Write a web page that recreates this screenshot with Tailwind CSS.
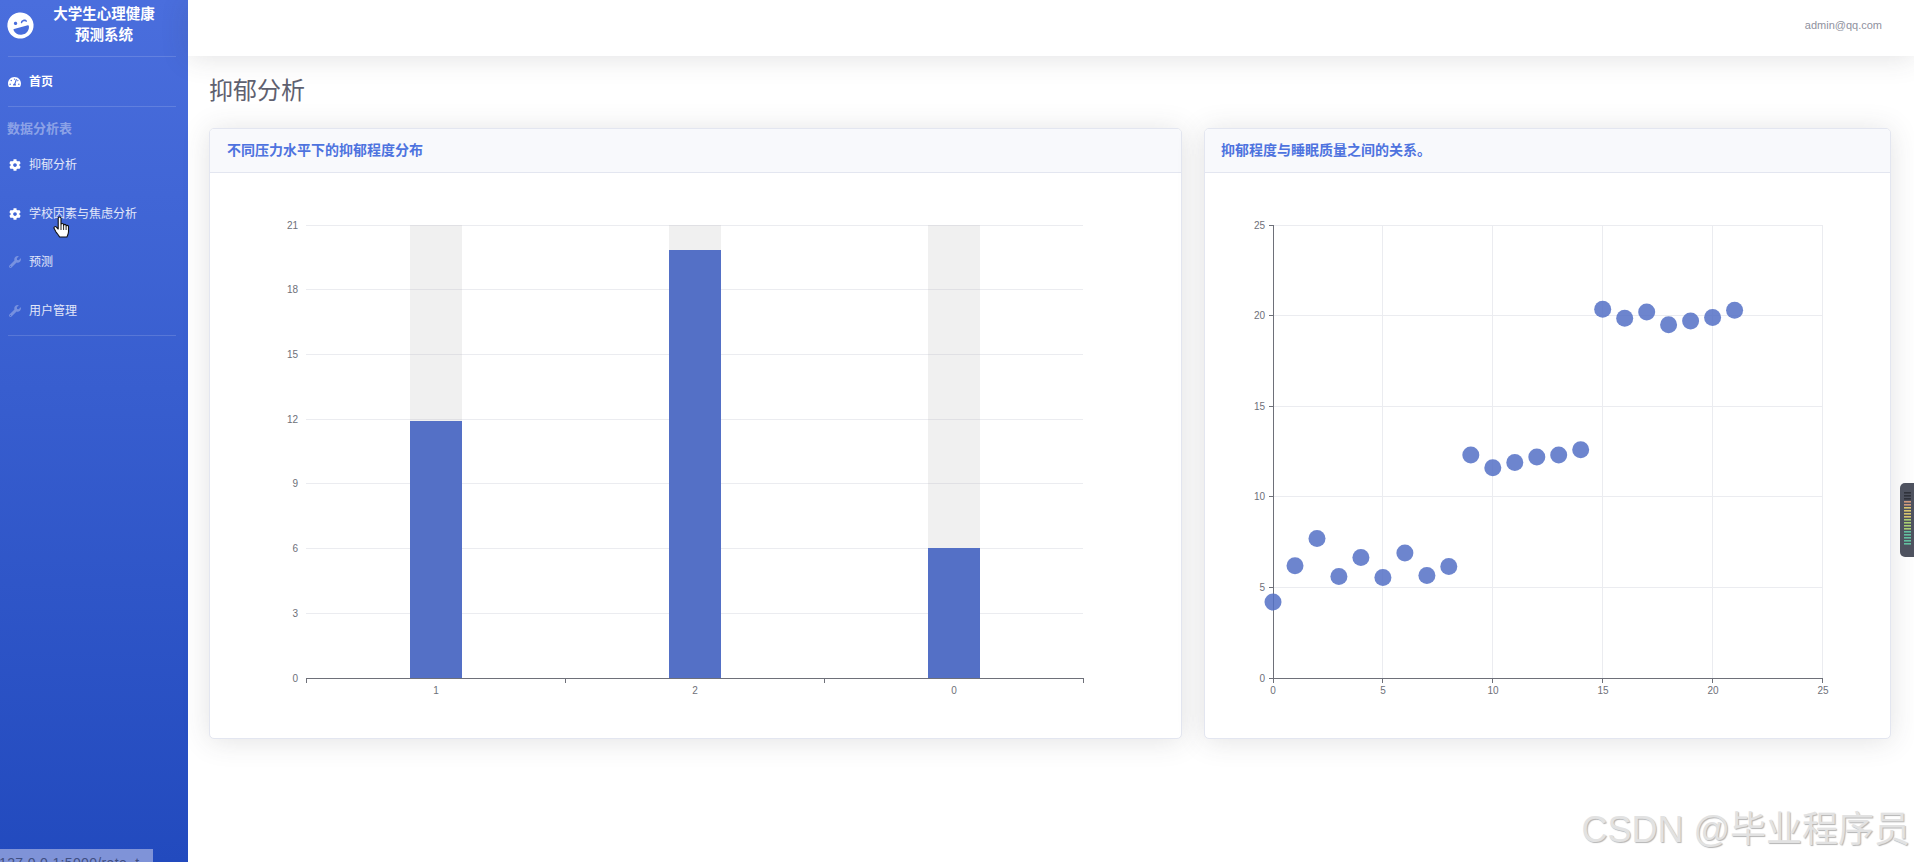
<!DOCTYPE html>
<html lang="zh-CN">
<head>
<meta charset="utf-8">
<title>抑郁分析</title>
<script src="https://cdn.jsdelivr.net/npm/@tailwindcss/browser@4"></script>
</head>
<body class="[font-family:'Liberation_Sans','Noto_Sans_CJK_SC',sans-serif] bg-white overflow-hidden">
<div class="relative flex h-[862px] w-[1914px] overflow-hidden bg-white">

  <!-- Sidebar -->
  <aside class="w-[188px] h-full shrink-0 flex flex-col bg-linear-to-b from-[#4a6edd] to-[#224abe] text-white">
    <div class="h-14 flex items-center pl-[7px] shrink-0">
      <svg class="w-[27px] h-[27px] -rotate-[15deg] shrink-0 -mt-[6px]" viewBox="0 0 496 512" fill="#fff"><path d="M248 8C111 8 0 119 0 256s111 248 248 248 248-111 248-248S385 8 248 8zm20.1 198.1c4-25.2 34.2-42.1 59.9-42.1s55.9 16.9 59.9 42.1c1.7 11.1-11.4 18.3-19.8 10.8l-9.5-8.5c-14.8-13.2-46.2-13.2-61 0L288 217c-8.4 7.4-21.6.3-19.9-10.9zM168 160c17.7 0 32 14.3 32 32s-14.3 32-32 32-32-14.3-32-32 14.3-32 32-32zm230.9 146C390 377 329.4 432 256 432h-16c-73.4 0-134-55-142.9-126-1.2-9.5 6.3-18 15.9-18h270c9.6 0 17.1 8.4 15.9 18z"/></svg>
      <div class="flex-1 text-center font-bold text-[14.5px] leading-[21px] -mt-[6px] pr-[14px]">大学生心理健康<br>预测系统</div>
    </div>
    <div class="ml-2 mr-3 h-px bg-white/15 shrink-0"></div>
    <a class="h-[49px] flex items-center pl-2 gap-[8px] font-bold text-[12px] shrink-0">
      <svg class="w-[13px] h-[12px]" viewBox="0 0 576 512" fill="#fff"><path d="M288 32C128.94 32 0 160.94 0 320c0 52.8 14.25 102.26 39.06 144.8 5.61 9.62 16.3 15.2 27.44 15.2h443c11.14 0 21.83-5.58 27.44-15.2C561.75 422.26 576 372.8 576 320c0-159.06-128.94-288-288-288zm0 64c14.71 0 26.58 10.13 30.32 23.65-1.11 2.26-2.64 4.23-3.45 6.67l-9.22 27.67c-5.13 3.49-10.97 6.01-17.64 6.01-17.67 0-32-14.33-32-32S270.33 96 288 96zM96 384c-17.67 0-32-14.33-32-32s14.33-32 32-32 32 14.33 32 32-14.33 32-32 32zm48-160c-17.67 0-32-14.33-32-32s14.33-32 32-32 32 14.33 32 32-14.33 32-32 32zm246.77-72.41l-61.33 184C343.13 347.33 352 364.54 352 384c0 11.72-3.38 22.55-8.88 32H232.88c-5.5-9.45-8.88-20.28-8.88-32 0-33.94 26.5-61.43 59.9-63.59l61.34-184.01c4.17-12.56 17.73-19.45 30.36-15.17 12.57 4.19 19.35 17.79 15.17 30.36zm14.66 57.2l15.52-46.55c3.47-1.29 7.13-2.23 11.05-2.23 17.67 0 32 14.33 32 32s-14.33 32-32 32c-11.38-.01-20.89-6.28-26.57-15.22zM480 384c-17.67 0-32-14.33-32-32s14.33-32 32-32 32 14.33 32 32-14.33 32-32 32z"/></svg>
      <span>首页</span>
    </a>
    <div class="ml-2 mr-3 h-px bg-white/15 shrink-0"></div>
    <div class="h-[34px] pl-[7px] pt-[13px] text-[13px] leading-[18px] font-bold text-white/40 shrink-0">数据分析表</div>
    <a class="h-[48.5px] flex items-center pl-[9px] gap-[8px] text-[12px] text-white/85 shrink-0">
      <svg class="w-3 h-3" viewBox="0 0 512 512" fill="#fff"><path d="M487.4 315.7l-42.6-24.6c4.3-23.2 4.3-47 0-70.2l42.6-24.6c4.9-2.8 7.1-8.6 5.5-14-11.1-35.6-30-67.8-54.7-94.6-3.8-4.1-10-5.1-14.8-2.3L380.8 110c-17.9-15.4-38.5-27.3-60.8-35.1V25.8c0-5.6-3.9-10.5-9.4-11.7-36.7-8.2-74.3-7.8-109.2 0-5.5 1.2-9.4 6.1-9.4 11.7V75c-22.2 7.9-42.8 19.8-60.8 35.1L88.7 85.5c-4.9-2.8-11-1.9-14.8 2.3-24.7 26.7-43.6 58.9-54.7 94.6-1.7 5.4.6 11.2 5.5 14L67.3 221c-4.3 23.2-4.3 47 0 70.2l-42.6 24.6c-4.9 2.8-7.1 8.6-5.5 14 11.1 35.6 30 67.8 54.7 94.6 3.8 4.1 10 5.1 14.8 2.3l42.6-24.6c17.9 15.4 38.5 27.3 60.8 35.1v49.2c0 5.6 3.9 10.5 9.4 11.7 36.7 8.2 74.3 7.8 109.2 0 5.5-1.2 9.4-6.1 9.4-11.7v-49.2c22.2-7.9 42.8-19.8 60.8-35.1l42.6 24.6c4.9 2.8 11 1.9 14.8-2.3 24.7-26.7 43.6-58.9 54.7-94.6 1.5-5.5-.7-11.3-5.6-14.1zM256 336c-44.1 0-80-35.9-80-80s35.9-80 80-80 80 35.9 80 80-35.9 80-80 80z"/></svg>
      <span>抑郁分析</span>
    </a>
    <a class="h-[48.5px] flex items-center pl-[9px] gap-[8px] text-[12px] text-white/85 shrink-0">
      <svg class="w-3 h-3" viewBox="0 0 512 512" fill="#fff"><path d="M487.4 315.7l-42.6-24.6c4.3-23.2 4.3-47 0-70.2l42.6-24.6c4.9-2.8 7.1-8.6 5.5-14-11.1-35.6-30-67.8-54.7-94.6-3.8-4.1-10-5.1-14.8-2.3L380.8 110c-17.9-15.4-38.5-27.3-60.8-35.1V25.8c0-5.6-3.9-10.5-9.4-11.7-36.7-8.2-74.3-7.8-109.2 0-5.5 1.2-9.4 6.1-9.4 11.7V75c-22.2 7.9-42.8 19.8-60.8 35.1L88.7 85.5c-4.9-2.8-11-1.9-14.8 2.3-24.7 26.7-43.6 58.9-54.7 94.6-1.7 5.4.6 11.2 5.5 14L67.3 221c-4.3 23.2-4.3 47 0 70.2l-42.6 24.6c-4.9 2.8-7.1 8.6-5.5 14 11.1 35.6 30 67.8 54.7 94.6 3.8 4.1 10 5.1 14.8 2.3l42.6-24.6c17.9 15.4 38.5 27.3 60.8 35.1v49.2c0 5.6 3.9 10.5 9.4 11.7 36.7 8.2 74.3 7.8 109.2 0 5.5-1.2 9.4-6.1 9.4-11.7v-49.2c22.2-7.9 42.8-19.8 60.8-35.1l42.6 24.6c4.9 2.8 11 1.9 14.8-2.3 24.7-26.7 43.6-58.9 54.7-94.6 1.5-5.5-.7-11.3-5.6-14.1zM256 336c-44.1 0-80-35.9-80-80s35.9-80 80-80 80 35.9 80 80-35.9 80-80 80z"/></svg>
      <span>学校因素与焦虑分析</span>
    </a>
    <a class="h-[48.5px] flex items-center pl-[9px] gap-[8px] text-[12px] text-white/85 shrink-0">
      <svg class="w-3 h-3" viewBox="0 0 512 512" fill="#fff" fill-opacity=".3"><path d="M507.73 109.1c-2.24-9.03-13.54-12.09-20.12-5.51l-74.36 74.36-67.88-11.31-11.31-67.88 74.36-74.36c6.62-6.62 3.43-17.9-5.66-20.16-47.38-11.74-99.55.91-136.58 37.93-39.64 39.64-50.55 97.1-34.05 147.2L18.74 402.76c-24.99 24.99-24.99 65.51 0 90.5 24.99 24.99 65.51 24.99 90.5 0l213.21-213.21c50.12 16.71 107.47 5.68 147.37-34.22 37.07-37.07 49.7-89.32 37.91-136.73zM64 472c-13.25 0-24-10.75-24-24 0-13.26 10.75-24 24-24s24 10.74 24 24c0 13.25-10.75 24-24 24z"/></svg>
      <span>预测</span>
    </a>
    <a class="h-[48.5px] flex items-center pl-[9px] gap-[8px] text-[12px] text-white/85 shrink-0">
      <svg class="w-3 h-3" viewBox="0 0 512 512" fill="#fff" fill-opacity=".3"><path d="M507.73 109.1c-2.24-9.03-13.54-12.09-20.12-5.51l-74.36 74.36-67.88-11.31-11.31-67.88 74.36-74.36c6.62-6.62 3.43-17.9-5.66-20.16-47.38-11.74-99.55.91-136.58 37.93-39.64 39.64-50.55 97.1-34.05 147.2L18.74 402.76c-24.99 24.99-24.99 65.51 0 90.5 24.99 24.99 65.51 24.99 90.5 0l213.21-213.21c50.12 16.71 107.47 5.68 147.37-34.22 37.07-37.07 49.7-89.32 37.91-136.73zM64 472c-13.25 0-24-10.75-24-24 0-13.26 10.75-24 24-24s24 10.74 24 24c0 13.25-10.75 24-24 24z"/></svg>
      <span>用户管理</span>
    </a>
    <div class="ml-2 mr-3 h-px bg-white/15 shrink-0"></div>
  </aside>

  <!-- Main -->
  <main class="flex-1 min-w-0 flex flex-col">
    <header class="relative z-10 h-14 shrink-0 bg-white flex items-center justify-end pr-[32px] shadow-[0_2px_28px_0_rgba(58,59,69,0.15)]">
      <span class="text-[11px] text-[#8f919e] -mt-[6px]">admin@qq.com</span>
    </header>
    <div class="flex-1 pl-[21px] pr-[23px]">
      <h1 class="h-[72px] pt-[19px] text-2xl leading-[32px] font-normal text-[#5f6170]">抑郁分析</h1>
      <div class="flex gap-[22px] h-[611px]">
        <section class="w-[973px] shrink-0 flex flex-col bg-white border border-[#e3e6f0] rounded-[5px] shadow-[0_2px_28px_0_rgba(58,59,69,0.15)] overflow-hidden">
          <div class="h-11 shrink-0 flex items-center pl-[17px] bg-[#f8f9fc] border-b border-[#e3e6f0] text-[14px] font-bold text-[#4e73df]">不同压力水平下的抑郁程度分布</div>
          <svg class="flex-1 w-full text-[10px] fill-[#6e7079]" viewBox="0 0 971 565" preserveAspectRatio="xMinYMin">
            <g stroke="#ebecf0" stroke-width="1">
              <line x1="96" x2="873" y1="52.5" y2="52.5"/><line x1="96" x2="873" y1="116.5" y2="116.5"/><line x1="96" x2="873" y1="181.5" y2="181.5"/><line x1="96" x2="873" y1="246.5" y2="246.5"/><line x1="96" x2="873" y1="310.5" y2="310.5"/><line x1="96" x2="873" y1="375.5" y2="375.5"/><line x1="96" x2="873" y1="440.5" y2="440.5"/>
            </g>
            <rect x="200" y="52" width="52" height="453" fill="#b4b4b4" fill-opacity=".2"/>
            <rect x="459" y="52" width="52" height="453" fill="#b4b4b4" fill-opacity=".2"/>
            <rect x="718" y="52" width="52" height="453" fill="#b4b4b4" fill-opacity=".2"/>
            <rect x="200" y="248" width="52" height="257" fill="#5470c6"/>
            <rect x="459" y="77" width="52" height="428" fill="#5470c6"/>
            <rect x="718" y="375" width="52" height="130" fill="#5470c6"/>
            <g stroke="#6e7079" stroke-width="1">
              <line x1="96" x2="873" y1="505.5" y2="505.5"/>
              <line x1="96.5" x2="96.5" y1="505" y2="510"/><line x1="355.5" x2="355.5" y1="505" y2="510"/><line x1="614.5" x2="614.5" y1="505" y2="510"/><line x1="873.5" x2="873.5" y1="505" y2="510"/>
            </g>
            <g text-anchor="end">
              <text x="88" y="56">21</text><text x="88" y="120">18</text><text x="88" y="185">15</text><text x="88" y="250">12</text><text x="88" y="314">9</text><text x="88" y="379">6</text><text x="88" y="444">3</text><text x="88" y="509">0</text>
            </g>
            <g text-anchor="middle">
              <text x="226" y="521">1</text><text x="485" y="521">2</text><text x="744" y="521">0</text>
            </g>
          </svg>
        </section>
        <section class="flex-1 min-w-0 flex flex-col bg-white border border-[#e3e6f0] rounded-[5px] shadow-[0_2px_28px_0_rgba(58,59,69,0.15)] overflow-hidden">
          <div class="h-11 shrink-0 flex items-center pl-[16px] bg-[#f8f9fc] border-b border-[#e3e6f0] text-[14px] font-bold text-[#4e73df]">抑郁程度与睡眠质量之间的关系。</div>
          <svg class="flex-1 w-full text-[10px] fill-[#6e7079]" viewBox="0 0 685 565" preserveAspectRatio="xMinYMin">
            <g stroke="#ebecf0" stroke-width="1">
              <line x1="68" x2="618" y1="52.5" y2="52.5"/><line x1="68" x2="618" y1="142.5" y2="142.5"/><line x1="68" x2="618" y1="233.5" y2="233.5"/><line x1="68" x2="618" y1="323.5" y2="323.5"/><line x1="68" x2="618" y1="414.5" y2="414.5"/>
              <line x1="177.5" x2="177.5" y1="52" y2="505"/><line x1="287.5" x2="287.5" y1="52" y2="505"/><line x1="397.5" x2="397.5" y1="52" y2="505"/><line x1="507.5" x2="507.5" y1="52" y2="505"/><line x1="617.5" x2="617.5" y1="52" y2="505"/>
            </g>
            <g stroke="#6e7079" stroke-width="1">
              <line x1="68.5" x2="68.5" y1="52" y2="505"/>
              <line x1="68" x2="618" y1="505.5" y2="505.5"/>
              <line x1="64" x2="68" y1="52.5" y2="52.5"/><line x1="64" x2="68" y1="142.5" y2="142.5"/><line x1="64" x2="68" y1="233.5" y2="233.5"/><line x1="64" x2="68" y1="323.5" y2="323.5"/><line x1="64" x2="68" y1="414.5" y2="414.5"/><line x1="64" x2="68" y1="505.5" y2="505.5"/>
              <line x1="68.5" x2="68.5" y1="505" y2="510"/><line x1="177.5" x2="177.5" y1="505" y2="510"/><line x1="287.5" x2="287.5" y1="505" y2="510"/><line x1="397.5" x2="397.5" y1="505" y2="510"/><line x1="507.5" x2="507.5" y1="505" y2="510"/><line x1="617.5" x2="617.5" y1="505" y2="510"/>
            </g>
            <g text-anchor="end">
              <text x="60" y="56">25</text><text x="60" y="146">20</text><text x="60" y="237">15</text><text x="60" y="327">10</text><text x="60" y="418">5</text><text x="60" y="509">0</text>
            </g>
            <g text-anchor="middle">
              <text x="68" y="521">0</text><text x="178" y="521">5</text><text x="288" y="521">10</text><text x="398" y="521">15</text><text x="508" y="521">20</text><text x="618" y="521">25</text>
            </g>
            <g fill="#5470c6" fill-opacity=".85">
              <circle cx="68" cy="429" r="8.5"/><circle cx="90" cy="392.7" r="8.5"/><circle cx="112" cy="365.5" r="8.5"/><circle cx="133.9" cy="403.5" r="8.5"/><circle cx="155.9" cy="384.5" r="8.5"/><circle cx="177.9" cy="404.4" r="8.5"/><circle cx="199.9" cy="380" r="8.5"/><circle cx="221.9" cy="402.6" r="8.5"/><circle cx="243.8" cy="393.6" r="8.5"/><circle cx="265.8" cy="282.1" r="8.5"/><circle cx="287.8" cy="294.8" r="8.5"/><circle cx="309.8" cy="289.4" r="8.5"/><circle cx="331.8" cy="283.9" r="8.5"/><circle cx="353.7" cy="282.1" r="8.5"/><circle cx="375.7" cy="276.7" r="8.5"/><circle cx="397.7" cy="136.3" r="8.5"/><circle cx="419.7" cy="145.3" r="8.5"/><circle cx="441.7" cy="139" r="8.5"/><circle cx="463.6" cy="151.7" r="8.5"/><circle cx="485.6" cy="148" r="8.5"/><circle cx="507.6" cy="144.4" r="8.5"/><circle cx="529.6" cy="137.2" r="8.5"/>
            </g>
          </svg>
        </section>
      </div>
    </div>
  </main>

  <!-- Mouse pointer over the nav item -->
  <svg class="absolute left-[53px] top-[216px] w-[18px] h-[23px]" viewBox="0 0 18 23">
    <path d="M5.2 2.2c0-1.6 2.8-1.6 2.8 0v6.4c0-1.5 2.6-1.5 2.6 0v.8c0-1.4 2.5-1.4 2.5 0v.9c0-1.3 2.4-1.2 2.4.3v5.2c0 2.4-1 3.4-1.6 5.2H6.6c-.8-1.8-2.2-3-3.6-5L1.2 12.6c-.9-1.4 1-2.8 2.2-1.5l1.8 1.9z" fill="#fff" stroke="#111" stroke-width="1.1" stroke-linejoin="round"/>
    <path d="M8 9v5M10.6 9.5V14M13.1 10.5V14" stroke="#111" stroke-width=".9" fill="none"/>
  </svg>

  <!-- Browser link status -->
  <div class="absolute left-0 bottom-0 w-[153px] h-[13px] overflow-hidden bg-[#7f93d8] text-[14px] leading-[18px] pt-[5px] whitespace-nowrap text-[#3f4f82] tracking-[0.35px] -indent-[1px]">127.0.0.1:5000/rate_t</div>

  <!-- Edge widget -->
  <div class="absolute right-0 top-[483px] w-[14px] h-[74px] rounded-l-[5px] bg-[#4e525f]">
    <svg class="absolute left-[4px] top-[9px] w-[7px] h-[56px]" viewBox="0 0 7 56">
      <g fill="#2f323b"><rect y="0" width="7" height="1.6"/><rect y="3" width="7" height="1.6"/><rect y="6" width="7" height="1.6"/></g>
      <g fill="#d09a7c"><rect y="9" width="7" height="1.6"/><rect y="12" width="7" height="1.6"/></g>
      <g fill="#d8c66e"><rect y="15" width="7" height="1.6"/><rect y="18" width="7" height="1.6"/><rect y="21" width="7" height="1.6"/><rect y="24" width="7" height="1.6"/></g>
      <g fill="#a9cf72"><rect y="27" width="7" height="1.6"/><rect y="30" width="7" height="1.6"/><rect y="33" width="7" height="1.6"/><rect y="36" width="7" height="1.6"/></g>
      <g fill="#62c0a0"><rect y="39" width="7" height="1.6"/><rect y="42" width="7" height="1.6"/><rect y="45" width="7" height="1.6"/><rect y="48" width="7" height="1.6"/><rect y="51" width="7" height="1.6"/></g>
    </svg>
  </div>

  <!-- Watermark -->
  <div class="absolute right-[4px] top-[806px] text-[36px] leading-[48px] whitespace-nowrap text-[#e2e2e2] [text-shadow:1px_1px_1px_#b4b4b4]">CSDN @毕业程序员</div>
</div>
</body>
</html>
